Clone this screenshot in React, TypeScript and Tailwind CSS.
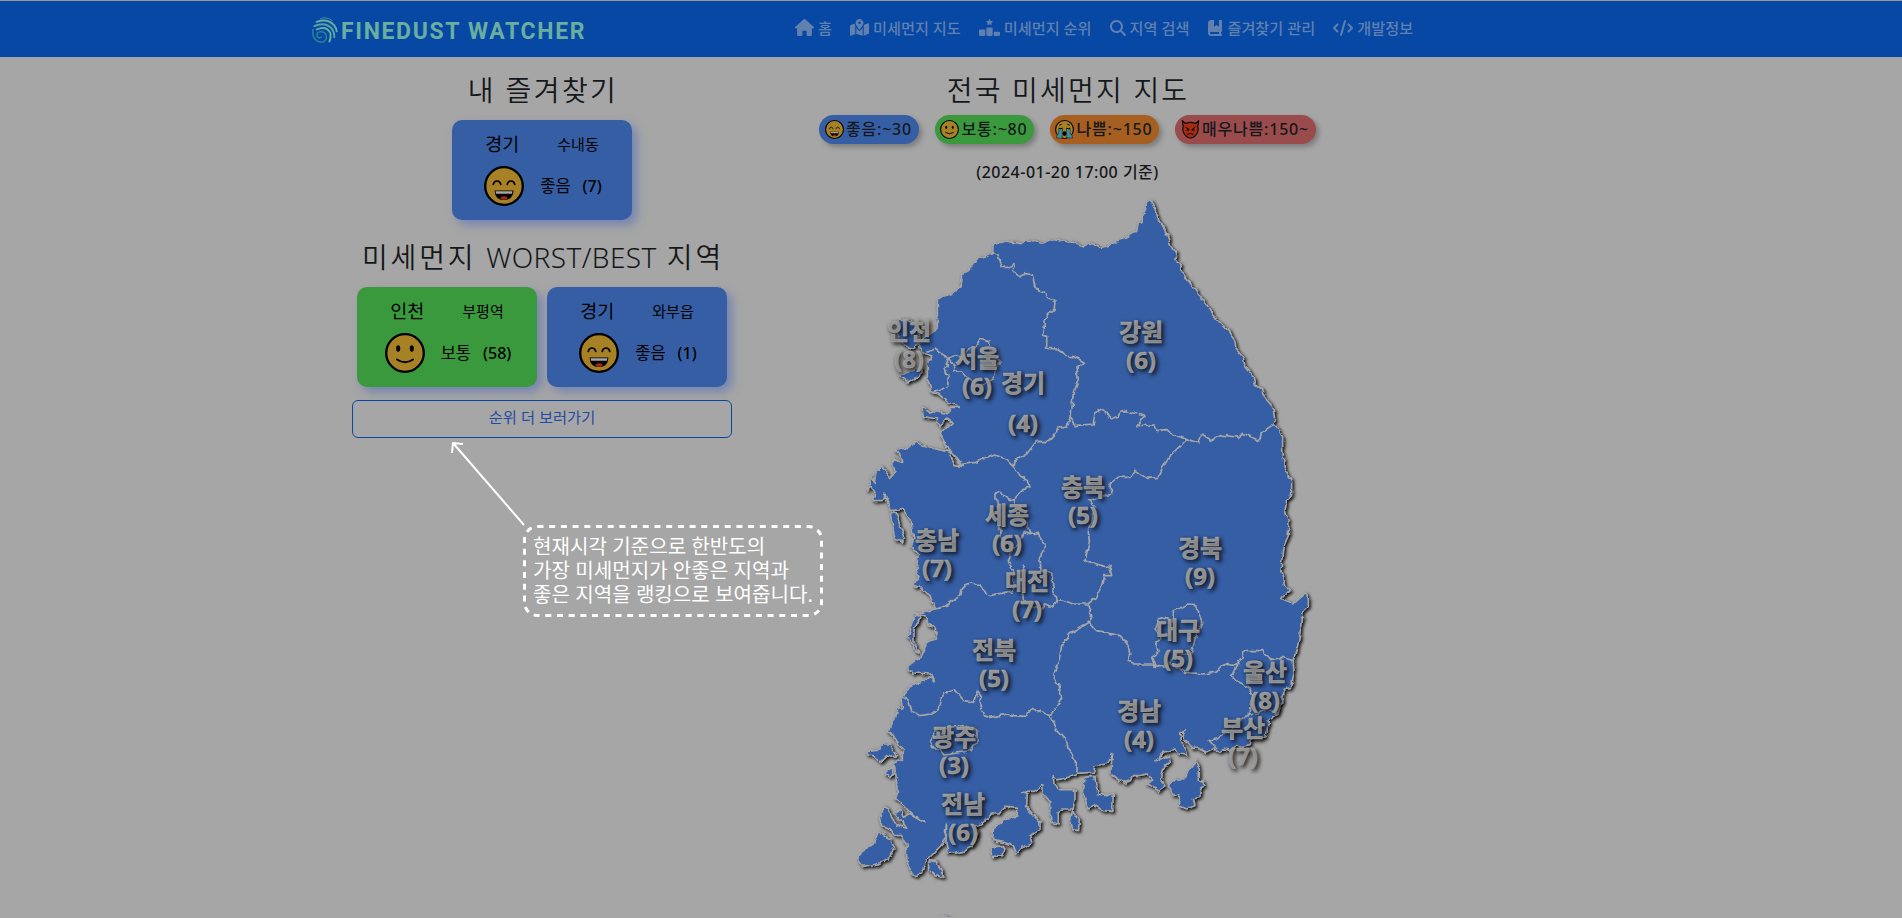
import type { ReactNode } from "react";
import { FaBookBookmark, FaCode, FaHouse, FaMagnifyingGlass, FaMapLocationDot, FaRankingStar } from "react-icons/fa6";

type Mood = "good" | "normal" | "bad" | "worst";

function Face({ mood, className }: { mood: Mood; className: string }) {
  if (mood === "worst") {
    return (
      <svg viewBox="0 0 40 40" className={className}>
        <path d="M3 2 Q3 8 5 13 Q2 20 6 28 Q12 38 20 38 Q28 38 34 28 Q38 20 35 13 Q37 8 37 2 Q33 7 29 7 Q20 3 11 7 Q7 7 3 2Z" fill="#a52b12" stroke="#0a0a0a" strokeWidth="2.4" />
        <path d="M10 15 L17 20 M30 15 L23 20 M14 30 Q20 26 26 30" fill="none" stroke="#0a0a0a" strokeWidth="2" strokeLinecap="round" />
        <circle cx="14" cy="21" r="2" />
        <circle cx="26" cy="21" r="2" />
      </svg>
    );
  }
  return (
    <svg viewBox="0 0 40 40" className={className}>
      <circle cx="20" cy="20" r="18.8" fill="#a68125" stroke="#000" strokeWidth="2.3" />
      {mood === "good" && (
        <>
          <path d="M9.2 18.5 Q10 15 13 15 Q16 15 16.8 18.5 M23.2 18.5 Q24 15 27 15 Q30 15 30.8 18.5" fill="none" stroke="#000" strokeWidth="1.6" strokeLinecap="round" />
          <path d="M10.5 24.5 H29.5 Q29 34 20 34 Q11 34 10.5 24.5Z" fill="#000" />
          <path d="M11.6 25.2 H28.4 L28 27.8 H12Z" fill="#a6a6a6" />
          <ellipse cx="20" cy="32" rx="3.4" ry="1.7" fill="#a52b12" />
        </>
      )}
      {mood === "normal" && (
        <>
          <ellipse cx="13.2" cy="15.5" rx="2" ry="3.2" />
          <ellipse cx="26.8" cy="15.5" rx="2" ry="3.2" />
          <path d="M12 26.5 Q20 32 28 26.5" fill="none" stroke="#000" strokeWidth="2" strokeLinecap="round" />
        </>
      )}
      {mood === "bad" && (
        <>
          <path d="M8 18 H16 L15 38 H3 Q3 32 8 28Z M24 18 H32 V28 Q37 32 37 38 H25Z" fill="#3a8fa6" stroke="#111" strokeWidth="1" />
          <path d="M8 17 Q12 20 16 17 M24 17 Q28 20 32 17 M9 11 L14 9 M31 11 L26 9" fill="none" stroke="#000" strokeWidth="2" />
          <ellipse cx="20" cy="28.5" rx="4.2" ry="5" />
        </>
      )}
    </svg>
  );
}

function NavItem({ icon, children }: { icon: ReactNode; children: ReactNode }) {
  return (
    <a className="flex items-center gap-[4px] whitespace-nowrap">
      {icon}
      <span>{children}</span>
    </a>
  );
}

function LogoMark() {
  return (
    <svg viewBox="0 0 78 80" className="mt-[3px] h-[27px] w-[26px]" fill="none" strokeLinecap="round">
      <path d="M26 4 Q46 -2 60 10" strokeWidth="3" stroke="#3f8f9c" />
      <path d="M14 14 Q46 2 66 24 Q73 33 74 42" strokeWidth="6" stroke="#66aea2" />
      <path d="M7 27 Q40 12 61 36 Q68 48 67 60" strokeWidth="6" stroke="#57a49f" />
      <path d="M14 37 Q44 24 55 48 Q58 62 52 73" strokeWidth="5.5" stroke="#66aea2" />
      <path d="M3 38 Q-1 60 16 72 Q36 82 43 64 Q45 46 28 43 Q14 44 15 56 Q19 65 28 60" strokeWidth="4.5" stroke="#2c8391" />
    </svg>
  );
}

function StationCard(p: { region: string; station: string; mood: Mood; label: string; value: number; tone: string }) {
  return (
    <div className={`flex h-[100px] w-[180px] flex-col items-center rounded-[10px] pt-[10px] text-black shadow-[5px_5px_10px_rgba(70,100,190,0.5)] ${p.tone}`}>
      <div className="flex h-[28px] items-center gap-[38px]">
        <span className="text-[18.5px]">{p.region}</span>
        <span className="text-[15px]">{p.station}</span>
      </div>
      <div className="mt-[8px] flex items-center pl-[2px]">
        <Face mood={p.mood} className="size-10" />
        <span className="ml-4 text-[16.5px]">{p.label}</span>
        <span className="ml-[12px] text-[16px] font-medium">({p.value})</span>
      </div>
    </div>
  );
}

function Pill({ mood, tone, children }: { mood: Mood; tone: string; children: ReactNode }) {
  return (
    <div className={`flex h-[29px] items-center justify-center gap-[2px] rounded-full pb-px text-[16px] font-medium text-[#15181b] shadow-[3px_3px_5px_rgba(0,0,0,0.25)] ${tone}`}>
      <Face mood={mood} className="mt-px size-[19px]" />
      <span className="tracking-[0.8px]">{children}</span>
    </div>
  );
}

const mainland =
  "M457,192 460,168 480,160 500,156 520,160 548,164 556,153 575,154 604,163 635,151 665,156 700,160 732,171 745,162 765,166 785,176 820,165 828,155 858,148 865,135 890,127 895,100 906,98 908,78 917,60 920,36 935,36 945,60 957,95 978,130 995,175 1010,200 1008,212 1017,222 1025,245 1045,275 1065,300 1085,330 1120,380 1160,420 1185,455 1188,480 1210,505 1215,535 1240,565 1245,585 1265,600 1272,620 1298,650 1305,700 1328,745 1328,780 1333,835 1355,880 1355,920 1340,935 1335,965 1347,1000 1345,1040 1328,1080 1323,1150 1335,1190 1350,1200 1325,1225 1355,1245 1380,1225 1397,1210 1405,1225 1405,1250 1390,1265 1385,1310 1375,1360 1360,1415 1362,1450 1355,1495 1330,1500 1325,1540 1315,1575 1285,1595 1280,1635 1260,1650 1235,1650 1230,1670 1205,1675 1185,1670 1170,1685 1155,1680 1140,1690 1125,1678 1100,1690 1075,1678 1055,1678 1040,1660 1028,1640 1036,1625 1022,1632 1024,1655 1034,1675 1040,1700 1020,1695 1005,1680 975,1690 945,1715 985,1700 988,1725 970,1740 963,1775 975,1790 960,1808 945,1795 922,1785 935,1775 922,1755 900,1760 880,1760 875,1775 850,1783 830,1770 812,1755 815,1715 818,1695 808,1715 800,1725 780,1728 765,1730 760,1750 710,1753 685,1765 650,1773 640,1760 642,1785 655,1802 705,1802 705,1830 700,1860 670,1860 655,1870 655,1905 632,1900 632,1840 610,1815 608,1787 598,1798 580,1810 545,1810 562,1818 560,1855 600,1900 600,1925 570,1940 575,1960 548,1975 530,1995 520,1970 490,1960 458,1955 460,1920 500,1890 518,1888 530,1885 530,1855 500,1852 480,1875 455,1875 425,1905 410,1910 410,1940 395,1975 375,1985 350,1993 325,1990 318,1965 320,1905 312,1960 265,2010 255,2020 245,2055 220,2060 205,2035 200,2005 198,1965 185,1940 165,1940 155,1925 125,1910 118,1890 130,1850 145,1860 155,1885 170,1908 200,1918 180,1890 165,1872 180,1860 190,1885 205,1875 225,1885 255,1902 225,1885 205,1865 185,1840 165,1828 172,1810 170,1780 165,1740 160,1725 170,1715 190,1710 190,1685 160,1640 145,1625 155,1595 165,1590 175,1555 188,1560 183,1530 193,1518 205,1492 235,1480 255,1473 270,1462 283,1480 275,1455 215,1452 203,1438 205,1430 245,1400 265,1355 290,1350 285,1315 265,1310 255,1280 225,1276 285,1260 270,1220 240,1195 220,1190 235,1160 230,1130 235,1095 213,1070 222,1050 210,990 190,962 150,965 135,915 130,935 100,935 108,910 90,895 80,902 95,860 103,880 108,845 125,835 140,848 152,865 165,850 155,810 188,820 185,805 165,780 205,778 225,760 280,778 325,788 345,830 370,832 325,782 300,735 337,700 320,690 300,712 288,702 290,690 250,682 245,650 270,672 290,665 325,675 330,655 360,655 325,640 295,615 275,610 262,570 262,520 275,500 245,490 235,460 285,425 292,415 292,330 345,310 360,290 365,255 385,245 415,205 430,203 Z";

const islands = [
  "M180,390 210,395 235,410 240,450 225,480 190,470 170,430Z",
  "M175,560 215,545 248,535 250,550 205,582Z",
  "M150,970 170,975 180,1010 195,1045 185,1058 165,1050 158,1010Z",
  "M80,1685 120,1680 130,1665 150,1665 160,1690 172,1700 150,1705 140,1700 120,1720 100,1700 85,1700Z",
  "M135,1750 160,1733 162,1755 150,1768Z",
  "M205,1330 220,1290 235,1276 240,1290 222,1320 222,1360 240,1395 225,1385 210,1350 200,1340Z",
  "M115,1928 150,1950 162,1980 150,2005 115,2025 70,2032 55,2018 60,1990 100,1965Z",
  "M268,2015 290,2018 312,2065 285,2060 270,2040Z",
  "M450,1975 490,1970 495,1980 485,2000 455,2003Z",
  "M698,1862 705,1878 718,1890 716,1925 695,1922 690,1900Z",
  "M735,1765 765,1762 768,1790 775,1815 800,1820 820,1812 818,1868 790,1865 765,1850 745,1860 730,1815Z",
  "M1068,1715 1078,1740 1078,1775 1092,1785 1080,1805 1080,1825 1060,1830 1065,1850 1040,1860 1018,1850 1020,1830 1012,1815 1000,1820 985,1790 1005,1770 1035,1770 1045,1745Z",
  "M290,2187 315,2181 330,2187Z",
];

const borders = [
  "M457,192 473,195 487,235 505,235 522,223 520,247 538,263 555,254 577,257 586,300 612,308 620,320 645,340 643,360 612,390 613,425 605,438 620,442 620,478 652,480 680,502 705,503 733,520 708,540 715,570 700,610 693,685 680,712 653,714 650,730 625,758 590,757 560,795 525,815 522,832",
  "M693,685 703,710 760,705 765,672 785,660 798,668 810,690 835,682 840,670 862,665 912,682 893,710 940,708 950,725 980,722 1000,738 1042,750 1075,762 1085,738 1115,755 1145,738 1195,745 1210,733 1258,755 1265,730 1305,703",
  "M345,830 405,820 465,798 500,810 522,832 540,860 562,875 567,895 550,898 522,928 510,932 480,910 465,915 465,930 475,940 480,1040 515,1080 505,1120 520,1150 520,1205 450,1220 435,1210 420,1187 390,1182 365,1195 358,1222 310,1255 285,1260",
  "M522,928 525,945 560,1000 570,1037 595,1030 600,1048 615,1065 600,1110 603,1145 635,1150 640,1205 650,1235 640,1255 615,1245 605,1260 580,1255 550,1235 545,1150 555,1130",
  "M570,1037 550,1030 535,1070 520,1080",
  "M650,1235 665,1232 700,1245 743,1245 755,1280 748,1300 690,1335 665,1370 660,1400 640,1465 655,1485 665,1525 645,1560 633,1580 575,1558 558,1582 520,1580 505,1575 475,1580 450,1585 430,1580 420,1550 422,1520 415,1510 400,1540 375,1535 345,1502 310,1515 300,1550 275,1575 235,1580 215,1565 207,1535 190,1525",
  "M633,1580 648,1620 680,1655 685,1680 712,1725 710,1753",
  "M1042,750 990,800 960,850 955,865 920,868 885,844 872,865 835,865 813,880 815,915 745,935 765,950 745,1025 748,1060 735,1115 755,1120 790,1132 810,1132 815,1160 790,1160 785,1190 770,1225 743,1245",
  "M748,1300 770,1325 840,1340 860,1360 873,1395 865,1415 885,1425 940,1425 945,1435 980,1430 1000,1425 1035,1450 1090,1455 1125,1450 1150,1425 1190,1430 1215,1385 1240,1385 1268,1385 1290,1412 1330,1405 1360,1415",
  "M945,1435 935,1405 957,1390 950,1360 965,1345 945,1320 955,1290 975,1285 1000,1300 1000,1265 1040,1248 1070,1250 1085,1300 1065,1350 1055,1390 1010,1400 975,1430",
  "M1190,1430 1175,1460 1190,1475 1225,1495 1238,1520 1230,1575 1200,1595 1175,1620 1130,1650 1105,1655 1125,1678",
  "M1230,1575 1260,1570 1285,1560 1315,1575",
  "M262,490 285,480 300,492 325,508 315,540 325,565 323,590 300,605 275,612",
  "M325,508 345,500 370,505 390,475 408,472 420,450 448,460 455,490 480,520 460,570 420,590 380,565 360,548 345,550 343,530Z",
  "M270,1655 285,1630 330,1615 375,1610 410,1625 412,1655 390,1685 315,1698 300,1680 275,1675Z",
];

const labels: [string, number, number, number][] = [
  ["인천", 8, 909, 341], ["서울", 6, 977, 368], ["강원", 6, 1141, 342], ["충북", 5, 1083, 497],
  ["세종", 6, 1007, 525], ["충남", 7, 937, 550], ["경북", 9, 1200, 558], ["대전", 7, 1027, 591],
  ["대구", 5, 1178, 640], ["전북", 5, 994, 660], ["울산", 8, 1265, 682], ["경남", 4, 1139, 721],
  ["부산", 7, 1243, 738], ["광주", 3, 954, 747], ["전남", 6, 963, 814],
];

function KoreaMap() {
  return (
    <svg viewBox="840 190 500 728" className="h-[728px] w-[500px]">
      <defs>
        <filter id="land" x="-5%" y="-5%" width="110%" height="110%" colorInterpolationFilters="sRGB">
          <feTurbulence type="fractalNoise" baseFrequency="0.05" numOctaves="2" seed="4" result="noise" />
          <feDisplacementMap in="SourceGraphic" in2="noise" scale="16" xChannelSelector="R" yChannelSelector="G" result="coast" />
          <feDropShadow in="coast" dx="5" dy="5" stdDeviation="4.5" floodColor="#000" floodOpacity="0.9" />
        </filter>
      </defs>
      <g transform="translate(840 190) scale(0.33333)">
        <g filter="url(#land)" fill="#365ea4" stroke="#a6a6a6" strokeWidth="5" strokeLinejoin="round">
          <path d={mainland} />
          {islands.map((d) => <path key={d} d={d} />)}
          <g fill="none">
            {borders.map((d) => <path key={d} d={d} />)}
          </g>
        </g>
      </g>
      <g className="fill-[#a6a6a6] stroke-[#a6a6a6] stroke-[0.5px] text-[24px] font-bold [text-shadow:2px_2px_4px_rgba(0,0,0,0.9)]" textAnchor="middle">
        {labels.map(([name, value, x, y]) => (
          <g key={name}>
            <text x={x} y={y}>{name}</text>
            <text x={x} y={y + 28}>({value})</text>
          </g>
        ))}
        <text x="1023" y="393">경기</text>
        <text x="1023" y="433">(4)</text>
      </g>
    </svg>
  );
}

export default function App() {
  return (
    <div className="relative h-[918px] w-[1902px] overflow-hidden bg-[#a6a6a6] font-['Noto_Sans','Noto_Sans_CJK_KR',sans-serif] text-[#15181b]">
      <header className="flex h-[57px] items-center border-t border-[#9a9a93] bg-[#0748a4] pl-[312px]">
        <div className="flex w-[483px] items-center gap-[3px]">
          <LogoMark />
          <span className="mt-[7px] whitespace-nowrap font-['Roboto',sans-serif] text-[23px] font-bold tracking-[1.65px] text-[#6aae9f]">FINEDUST WATCHER</span>
        </div>
        <nav className="flex items-center gap-[18px] pb-[2px] text-[15.2px] font-medium text-[#6080b0]">
          <NavItem icon={<FaHouse size={19} />}>홈</NavItem>
          <NavItem icon={<FaMapLocationDot size={19} />}>미세먼지 지도</NavItem>
          <NavItem icon={<FaRankingStar size={21} />}>미세먼지 순위</NavItem>
          <NavItem icon={<FaMagnifyingGlass size={16} />}>지역 검색</NavItem>
          <NavItem icon={<FaBookBookmark size={16} />}>즐겨찾기 관리</NavItem>
          <NavItem icon={<FaCode size={20} />}>개발정보</NavItem>
        </nav>
      </header>
      <main className="flex pl-[292px]">
        <section className="flex w-[500px] flex-col items-center pt-[14px]">
          <h3 className="h-[38px] pl-[2px] text-[28px] font-[350] leading-[38px] tracking-[2.4px]">내 즐겨찾기</h3>
          <div className="mt-[11px]">
            <StationCard region="경기" station="수내동" mood="good" label="좋음" value={7} tone="bg-[#365ea4]" />
          </div>
          <h3 className="mt-[18px] h-[38px] pl-[2px] text-[28px] font-[350] leading-[38px] tracking-[2.8px]">
            미세먼지 <span className="tracking-[0.4px]">WORST/BEST</span> 지역
          </h3>
          <div className="mt-[11px] flex gap-[10px]">
            <StationCard region="인천" station="부평역" mood="normal" label="보통" value={58} tone="bg-[#3a993d]" />
            <StationCard region="경기" station="와부읍" mood="good" label="좋음" value={1} tone="bg-[#365ea4]" />
          </div>
          <button className="mt-[13px] h-[38px] w-[380px] rounded-[6px] border border-[#0748a4] pb-[3px] text-[15.3px] text-[#1f4ba4]">순위 더 보러가기</button>
        </section>
        <section className="flex w-[550px] flex-col items-center pt-[14px]">
          <h3 className="h-[38px] pl-[2px] text-[28px] font-[350] leading-[38px] tracking-[2.2px]">전국 미세먼지 지도</h3>
          <div className="mt-[6px] flex gap-[16px]">
            <Pill mood="good" tone="w-[100px] bg-[#365ea4]">좋음:~30</Pill>
            <Pill mood="normal" tone="w-[99px] bg-[#3a993d]">보통:~80</Pill>
            <Pill mood="bad" tone="w-[109px] bg-[#a65f21]">나쁨:~150</Pill>
            <Pill mood="worst" tone="w-[141px] bg-[#9a4b4c]">매우나쁨:150~</Pill>
          </div>
          <p className="mt-[16px] h-[24px] pl-px text-[16px] font-medium leading-[24px] tracking-[0.5px]">(2024-01-20 17:00 기준)</p>
          <div className="ml-[46px] mt-[5px]"><KoreaMap /></div>
        </section>
      </main>
      <svg className="pointer-events-none absolute left-[440px] top-[430px] h-[100px] w-[100px]" fill="none" stroke="#fff" strokeWidth="2">
        <path d="M84 95 L13 13 M12 23 L13 13 L23 14" />
      </svg>
      <div className="absolute left-[523px] top-[525px] h-[92px] w-[300px]">
        <svg className="absolute inset-0 size-full" fill="none" stroke="#fff" strokeWidth="3">
          <rect x="1.5" y="1.5" width="297" height="89" rx="13" strokeDasharray="6 5.7" />
        </svg>
        <p className="whitespace-nowrap pl-[10px] pt-[10px] text-[20.1px] leading-[24px] text-white">
          현재시각 기준으로 한반도의<br />가장 미세먼지가 안좋은 지역과<br />좋은 지역을 랭킹으로 보여줍니다.
        </p>
      </div>
    </div>
  );
}
